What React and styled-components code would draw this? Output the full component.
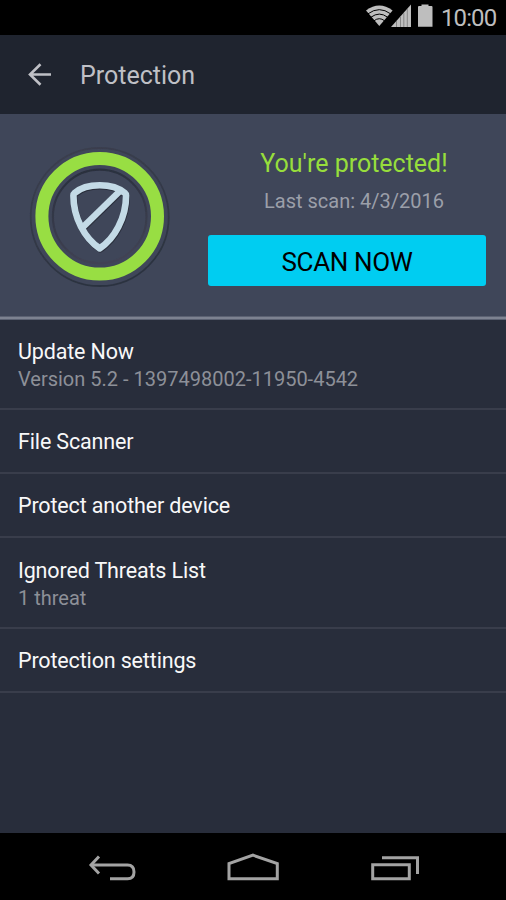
import React from 'react'
import styled, { createGlobalStyle } from 'styled-components';

const GlobalStyle = createGlobalStyle`
    html, body {
        margin:0;
        padding:0;
        background:#000;
    }
    * {
        box-sizing:border-box;
    }
`;

const Screen = styled.div`
    display:flex;
    flex-direction:column;
    width:506px;
    height:900px;
    overflow:hidden;
    background:#282d3b;
    font-family:Roboto, sans-serif;
`;

const StatusBar = styled.div`
    display:flex;
    justify-content:flex-end;
    align-items:center;
    height:35px;
    padding-right:9px;
    background:#000;
    color:#bebebe;
`;

const StatusIcons = styled.svg`
    display:block;
    width:76px;
    height:35px;
`;

const Clock = styled.div`
    width:56px;
    font-size:24px;
    line-height:35px;
    letter-spacing:-0.9px;
    padding-top:2px;
    white-space:nowrap;
`;

const Header = styled.div`
    display:flex;
    align-items:center;
    height:79px;
    padding-left:27px;
    background:#1f242f;
    color:#bfc0c6;
`;

const BackIcon = styled.svg`
    display:block;
    width:26px;
    height:26px;
    margin-right:26px;
`;

const Title = styled.div`
    font-size:25px;
    line-height:30px;
    padding:3px 0 0 1px;
`;

const Hero = styled.div`
    display:flex;
    height:206px;
    background:#3f4659;
    border-bottom:1px solid #5b6172;
    box-shadow:inset 0 -2px 0 #7d8291, inset 0 -3px 0 #5b6172;
`;

const Shield = styled.svg`
    display:block;
    width:208px;
    height:202px;
`;

const HeroInfo = styled.div`
    display:flex;
    flex-direction:column;
    width:278px;
    padding-top:34px;
    text-align:center;
`;

const HeroTitle = styled.div`
    padding-left:14px;
    font-size:25px;
    line-height:32px;
    color:#97de3c;
`;

const LastScan = styled.div`
    margin-top:7px;
    padding-left:14px;
    font-size:20px;
    line-height:28px;
    color:#9b9fa9;
`;

const ScanButton = styled.button`
    width:278px;
    height:51px;
    margin-top:20px;
    padding:2px 0 0;
    border:0;
    border-radius:3px;
    background:#00cdf1;
    color:#000;
    font-family:inherit;
    font-size:26px;
    line-height:30px;
    letter-spacing:-0.35px;
`;

const List = styled.div`
    flex:1;
`;

const Row = styled.div`
    height:${props => props.$height}px;
    padding:${props => props.$top}px 18px 0;
    border-bottom:2px solid #393d4b;
`;

const RowTitle = styled.div`
    font-size:21.5px;
    line-height:28px;
    letter-spacing:-0.15px;
    color:#f8f8f9;
`;

const RowText = styled.div`
    margin-top:-1px;
    font-size:20px;
    line-height:28px;
    color:#8d9098;
`;

const NavBar = styled.div`
    height:67px;
    background:#000;
`;

const NavIcons = styled.svg`
    display:block;
    width:506px;
    height:67px;
`;

const rows = [
    { title: 'Update Now', text: 'Version 5.2 - 1397498002-11950-4542', height: 90, top: 18 },
    { title: 'File Scanner', height: 64, top: 18 },
    { title: 'Protect another device', height: 64, top: 18 },
    { title: 'Ignored Threats List', text: '1 threat', height: 91, top: 19 },
    { title: 'Protection settings', height: 64, top: 18 },
];

const shieldPath = 'M99.7 248.4C85 239 73.4 218 73.4 195.5Q73.4 194 74.6 193C81 187.5 89 185.3 99.7 185.3C110.4 185.3 118.4 187.5 124.9 193Q126.1 194 126.1 195.5C126.1 218 114.4 239 99.7 248.4Z';

const App = () => {
    return (
        <>
            <GlobalStyle/>
            <Screen>
                <StatusBar>
                    <StatusIcons viewBox='365 0 76 35'>
                        <path d='M366 10.5 Q379.3 0.5 392.6 10.5 L379.3 26 Z' fill='#bebebe'/>
                        <g fill='none' stroke='#000' strokeWidth='1'>
                            <path d='M368 13.8 Q379.3 5.5 390.6 13.8'/>
                            <path d='M371 17.2 Q379.3 11 387.6 17.2'/>
                            <path d='M374 20.8 Q379.3 16.6 384.6 20.8'/>
                        </g>
                        <path d='M391 27 L411 4.5 V27 Z' fill='#bebebe'/>
                        <path d='M396.5 21v6M400.5 17v10M403.8 13v14M407.3 9v18' stroke='#777' strokeWidth='0.8'/>
                        <path d='M418 7 q0-1 1-1 h2.5 v-1.5 h7 v1.5 h3 q1 0 1 1 v19.8 h-14.5z' fill='#bebebe'/>
                    </StatusIcons>
                    <Clock>10:00</Clock>
                </StatusBar>
                <Header>
                    <BackIcon viewBox='27 62 26 26' fill='none' stroke='#bfc0c6' strokeWidth='2.6'>
                        <path d='M51 74.5H30M40.5 64.2L30 74.5L40.5 84.7'/>
                    </BackIcon>
                    <Title>Protection</Title>
                </Header>
                <Hero>
                    <Shield viewBox='0 114 208 202' fill='none'>
                        <defs>
                            <linearGradient id='outer' x1='0' y1='0' x2='0.3' y2='1'>
                                <stop offset='0' stopColor='#3c4050'/>
                                <stop offset='1' stopColor='#2c3340'/>
                            </linearGradient>
                            <linearGradient id='inner' x1='0.3' y1='0' x2='0.5' y2='1'>
                                <stop offset='0' stopColor='#292f3d'/>
                                <stop offset='1' stopColor='#414354'/>
                            </linearGradient>
                            <filter id='soft' x='-10%' y='-10%' width='120%' height='120%'>
                                <feGaussianBlur stdDeviation='0.7'/>
                            </filter>
                        </defs>
                        <circle cx='99.7' cy='217' r='69' stroke='url(#outer)' strokeWidth='1.8' filter='url(#soft)'/>
                        <circle cx='99.7' cy='216.5' r='46.8' stroke='url(#inner)' strokeWidth='2.2' filter='url(#soft)'/>
                        <circle cx='99.7' cy='216.3' r='57.8' stroke='#98de43' strokeWidth='13'/>
                        <g strokeWidth='6.6' strokeLinejoin='round'>
                            <g stroke='#292e3b' transform='translate(0.6 0.9)' filter='url(#soft)'>
                                <path d={shieldPath}/>
                                <path d='M81.5 228.5L121 190'/>
                            </g>
                            <g stroke='#c3dae6'>
                                <path d={shieldPath}/>
                                <path d='M81.5 228.5L121 190'/>
                            </g>
                        </g>
                    </Shield>
                    <HeroInfo>
                        <HeroTitle>You're protected!</HeroTitle>
                        <LastScan>Last scan: 4/3/2016</LastScan>
                        <ScanButton>SCAN NOW</ScanButton>
                    </HeroInfo>
                </Hero>
                <List>
                    {rows.map(row => (
                        <Row key={row.title} $height={row.height} $top={row.top}>
                            <RowTitle>{row.title}</RowTitle>
                            {row.text && <RowText>{row.text}</RowText>}
                        </Row>
                    ))}
                </List>
                <NavBar>
                    <NavIcons viewBox='0 833 506 67' fill='none' stroke='#a3a3a3' strokeWidth='3'>
                        <path d='M91 865H127.5Q134 865 134 872Q134 878.8 127.5 878.8H110'/>
                        <path d='M99 856.5L91 865L99 873.5'/>
                        <path d='M229 878.8V863.5L253 855.2L277.3 863.5V878.8Z'/>
                        <path d='M372.7 864.8H409.3V878.8H372.7Z'/>
                        <path d='M382 857.8H417.5V874'/>
                    </NavIcons>
                </NavBar>
            </Screen>
        </>
    )
}

export default App
